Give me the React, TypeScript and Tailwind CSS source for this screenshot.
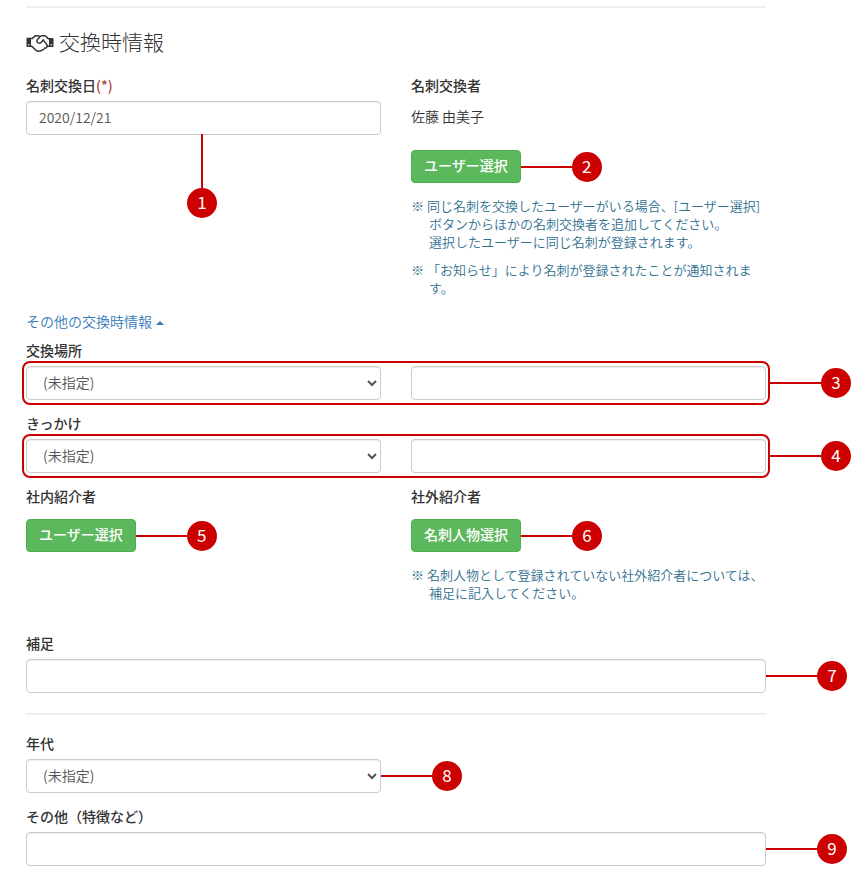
import { useState } from "react";
import type { ReactNode } from "react";

const controlClass =
  "block w-full h-[34px] rounded border border-[#ccc] bg-white pb-0.5 text-sm font-[350] text-[#555] shadow-[inset_0_1px_1px_rgba(0,0,0,0.075)]";
const labelClass = "block mb-1.5 text-sm leading-5 font-medium";

function HandshakeIcon() {
  return (
    <svg viewBox="0 0 2304 1792" fill="currentColor" aria-hidden="true" className="mt-0.5 w-7 h-[21px]">
      <path d="M192 1152q40 0 56-32t0-64-56-32-56 32 0 64 56 32zM1665 1094q-10-13-38.5-50t-41.5-54-38-49-42.5-53-40.5-47-45-49l-125 140q-83 94-208.5 92t-205.5-98q-57-69-56.5-158t58.5-157l177-206q-22-11-51-16.5t-47.5-6-56.5.5-49 1q-92 0-158 66l-158 158h-155v544q5 0 21-.5t22 0 19.5 2 20.5 4.5 17.5 8.5 18.5 13.5l297 292q115 111 227 111 78 0 125-47 57 20 112.5-8t72.5-85q74 6 127-44 20-18 36-45.5t14-50.5q10 10 43 10 43 0 77-21t49.5-53 12-71.5-30.5-73.5zM1824 1152h96v-512h-93l-157-180q-66-76-169-76h-167q-89 0-146 67l-209 243q-28 33-28 75t27 75q43 51 110 52t111-49l193-218q25-23 53.5-21.5t47 27 8.5 56.5q16 19 56 63t60 68q29 36 82.5 105.5t64.5 84.5q52 66 60 140zM2112 1152q40 0 56-32t0-64-56-32-56 32 0 64 56 32zM2304 576v640q0 26-19 45t-45 19h-434q-27 65-82 106.5t-125 51.5q-33 48-80.5 81.5t-102.5 45.5q-42 53-104.5 81.5t-128.5 24.5q-60 34-126 39.5t-127.5-14-117-53.5-103.5-81l-287-282h-358q-26 0-45-19t-19-45v-672q0-26 19-45t45-19h421q14-14 47-48t47.5-48 44-40 50.5-37.5 51-25.5 62-19.5 68-5.5h117q99 0 181 56 82-56 181-56h167q35 0 67 6t56.5 14.5 51.5 26.5 44.5 31 43 39.5 39 41 41 45 41.5 48.5h355q26 0 45 19t19 45z" />
    </svg>
  );
}

function Callout({ number, down = false }: { number: number; down?: boolean }) {
  return (
    <span
      className={
        down
          ? "absolute top-full left-44 -translate-x-1/2 -mt-px flex flex-col items-center"
          : "absolute left-full top-1/2 -translate-y-1/2 flex items-center"
      }
    >
      <span className={down ? "w-0.5 h-[54px] bg-[#c00]" : "h-0.5 w-[51px] bg-[#c00]"} />
      <span className="w-[30px] h-[30px] rounded-full bg-[#c00] text-white text-[17px] leading-7 text-center">
        {number}
      </span>
    </span>
  );
}

function UnspecifiedSelect({ id }: { id: string }) {
  return (
    <select id={id} className={`${controlClass} px-3`}>
      <option>(未指定)</option>
    </select>
  );
}

function SelectButton({ number, children }: { number: number; children: ReactNode }) {
  return (
    <div className="relative w-fit">
      <button
        type="button"
        className="block h-[33px] px-3 pb-1 rounded border border-[#4cae4c] bg-[#5cb85c] text-sm font-medium text-white"
      >
        {children}
      </button>
      <Callout number={number} />
    </div>
  );
}

function Note({ children }: { children: ReactNode }) {
  return (
    <p className="pl-[18px] -indent-[18px] text-[13px] leading-[18px] text-[#31708f]">※ {children}</p>
  );
}

// Select plus free text, framed together as one item
function FramedRow({ id, label, number }: { id: string; label: string; number: number }) {
  return (
    <div className="mb-[13px]">
      <label htmlFor={id} className={labelClass}>
        {label}
      </label>
      <div className="relative grid grid-cols-2 gap-[30px]">
        <UnspecifiedSelect id={id} />
        <input type="text" aria-label={`${label} 詳細`} className={`${controlClass} px-3`} />
        <div className="absolute -inset-x-1 -inset-y-[5px] rounded-lg outline-2 -outline-offset-2 outline-[#c00] pointer-events-none">
          <Callout number={number} />
        </div>
      </div>
    </div>
  );
}

function TextRow({ id, label, number }: { id: string; label: string; number: number }) {
  return (
    <div>
      <label htmlFor={id} className={labelClass}>
        {label}
      </label>
      <div className="relative">
        <input id={id} type="text" className={`${controlClass} px-3`} />
        <Callout number={number} />
      </div>
    </div>
  );
}

export default function App() {
  const [date, setDate] = useState("2020/12/21");
  const [open, setOpen] = useState(true);

  return (
    <main className="bg-white pt-1.5 pb-2 pl-[26px] pr-[86px] text-sm text-[#333] font-['Noto_Sans_CJK_JP',sans-serif]">
      <hr className="border-t-2 border-[#eee]" />

      <h2 className="mt-[19px] mb-5 flex items-center gap-[5px] text-[21px] leading-7 font-light">
        <HandshakeIcon />
        交換時情報
      </h2>

      <form>
        <div className="grid grid-cols-2 gap-[30px]">
          <div>
            <label htmlFor="date" className={labelClass}>
              名刺交換日<span className="text-[#a94442]">(*)</span>
            </label>
            <div className="relative">
              <input
                id="date"
                type="text"
                value={date}
                onChange={(e) => setDate(e.target.value)}
                className={`${controlClass} px-3`}
              />
              <Callout number={1} down />
            </div>
          </div>

          <div>
            <h3 className="text-sm leading-5 font-medium">名刺交換者</h3>
            <p className="mt-[11px] mb-6 leading-5 font-[350]">佐藤 由美子</p>
            <SelectButton number={2}>ユーザー選択</SelectButton>
            <div className="mt-3.5 space-y-2.5 font-[350]">
              <Note>
                同じ名刺を交換したユーザーがいる場合、[ユーザー選択]
                <br />
                <span className="inline-block indent-0">ボタンからほかの名刺交換者を追加してください。</span>
                <br />
                <span className="inline-block indent-0">選択したユーザーに同じ名刺が登録されます。</span>
              </Note>
              <Note>「お知らせ」により名刺が登録されたことが通知されます。</Note>
            </div>
          </div>
        </div>

        <button
          type="button"
          aria-expanded={open}
          onClick={() => setOpen(!open)}
          className="mt-3.5 mb-[9px] flex items-center gap-1 leading-5 font-[350] text-[#337ab7]"
        >
          その他の交換時情報
          <span className="mt-1 border-x-4 border-b-4 border-x-transparent border-b-[#337ab7]" />
        </button>

        {open && (
          <>
            <FramedRow id="place" label="交換場所" number={3} />
            <FramedRow id="trigger" label="きっかけ" number={4} />

            <div className="mb-[31px] grid grid-cols-2 gap-[30px]">
              <div>
                <h3 className="mb-[13px] text-sm leading-5 font-medium">社内紹介者</h3>
                <SelectButton number={5}>ユーザー選択</SelectButton>
              </div>
              <div>
                <h3 className="mb-[13px] text-sm leading-5 font-medium">社外紹介者</h3>
                <SelectButton number={6}>名刺人物選択</SelectButton>
                <div className="mt-3.5 font-[350]">
                  <Note>名刺人物として登録されていない社外紹介者については、補足に記入してください。</Note>
                </div>
              </div>
            </div>

            <TextRow id="supplement" label="補足" number={7} />
          </>
        )}

        <hr className="mt-5 mb-[18px] border-t-2 border-[#eee]" />

        <div className="mb-[13px] grid grid-cols-2 gap-[30px]">
          <div>
            <label htmlFor="age" className={labelClass}>
              年代
            </label>
            <div className="relative">
              <UnspecifiedSelect id="age" />
              <Callout number={8} />
            </div>
          </div>
        </div>

        <TextRow id="other" label="その他（特徴など）" number={9} />
      </form>
    </main>
  );
}
